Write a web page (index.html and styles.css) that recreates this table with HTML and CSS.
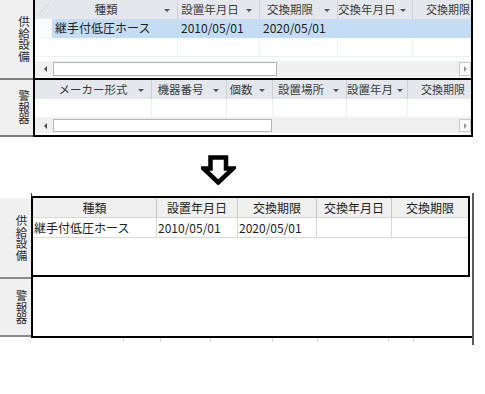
FILE: index.html
```html
<!DOCTYPE html>
<html lang="ja">
<head>
<meta charset="utf-8">
<link rel="stylesheet" href="styles.css">
</head>
<body>
<div class="top">
  <div class="sec s1">
    <div class="lbl"><span class="vt">供給設備</span></div>
    <div class="sub">
      <div class="grid g1 hdr">
        <div class="corner"></div>
        <div class="hc"><span class="ht">種類</span><i class="dd"></i></div>
        <div class="hc"><span class="ht">設置年月日</span><i class="dd"></i></div>
        <div class="hc"><span class="ht">交換期限</span><i class="dd"></i></div>
        <div class="hc"><span class="ht">交換年月日</span><i class="dd"></i></div>
        <div class="hc last"><span class="ht">交換期限</span></div>
      </div>
      <div class="grid g1 row sel">
        <div class="rs"></div>
        <div class="dc">継手付低圧ホース</div>
        <div class="dc">2010/05/01</div>
        <div class="dc">2020/05/01</div>
        <div class="dc"></div>
        <div class="dc"></div>
      </div>
      <div class="grid g1 row">
        <div class="rs"></div>
        <div class="dc"></div>
        <div class="dc"></div>
        <div class="dc"></div>
        <div class="dc"></div>
        <div class="dc"></div>
      </div>
      <div class="hscroll">
        <div class="sbtn left"><i class="tl"></i></div>
        <div class="thumb t1"></div>
        <div class="track"></div>
        <div class="sbtn right"><i class="tr"></i></div>
      </div>
    </div>
  </div>
  <div class="sec s2">
    <div class="lbl"><span class="vt">警報器</span></div>
    <div class="sub">
      <div class="grid g2 hdr">
        <div class="corner"></div>
        <div class="hc"><span class="ht">メーカー形式</span><i class="dd"></i></div>
        <div class="hc"><span class="ht">機器番号</span><i class="dd"></i></div>
        <div class="hc"><span class="ht">個数</span><i class="dd"></i></div>
        <div class="hc"><span class="ht">設置場所</span><i class="dd"></i></div>
        <div class="hc"><span class="ht">設置年月</span><i class="dd"></i></div>
        <div class="hc last"><span class="ht">交換期限</span></div>
      </div>
      <div class="grid g2 row">
        <div class="rs"></div>
        <div class="dc"></div>
        <div class="dc"></div>
        <div class="dc"></div>
        <div class="dc"></div>
        <div class="dc"></div>
        <div class="dc"></div>
      </div>
      <div class="hscroll">
        <div class="sbtn left"><i class="tl"></i></div>
        <div class="thumb t2"></div>
        <div class="track"></div>
        <div class="sbtn right"><i class="tr"></i></div>
      </div>
    </div>
  </div>
</div>

<div class="arrowrow">
  <svg class="arrow" width="35" height="30" viewBox="0 0 35 30">
    <path d="M9.5,2.5 H25 V13.5 H32 L17.25,27.5 L2.5,13.5 H9.5 Z" fill="#fff" stroke="#000" stroke-width="4.5" stroke-linejoin="miter"/>
  </svg>
</div>

<div class="bot">
  <div class="lcol">
    <div class="blbl b1"><span class="vt">供給設備</span></div>
    <div class="bsep"></div>
    <div class="blbl b2"><span class="vt">警報器</span></div>
    <div class="bsep"></div>
  </div>
  <div class="main">
    <div class="stub"></div>
    <div class="box">
      <div class="grid g3 bh">
        <div class="bc">種類</div>
        <div class="bc">設置年月日</div>
        <div class="bc">交換期限</div>
        <div class="bc">交換年月日</div>
        <div class="bc">交換期限</div>
      </div>
      <div class="grid g3 br">
        <div class="bd">継手付低圧ホース</div>
        <div class="bd">2010/05/01</div>
        <div class="bd">2020/05/01</div>
        <div class="bd"></div>
        <div class="bd"></div>
      </div>
    </div>
    <div class="bsec2"></div>
    <div class="ticks">
      <i class="tk k1"></i><i class="tk k2"></i><i class="tk k3"></i><i class="tk k4"></i><i class="tk k5"></i><i class="tk k6"></i><i class="tk k7"></i>
    </div>
  </div>
  <div class="rline"></div>
</div>
</body>
</html>
```

FILE: styles.css
```css
* { box-sizing: border-box; }
html, body { margin: 0; padding: 0; background: #fff; }
body {
  width: 485px;
  height: 394px;
  overflow: hidden;
  font-family: "Noto Sans CJK JP", "Noto Sans", sans-serif;
  font-size: 12px;
  color: #1e1e1e;
}

/* ---------- top (before) ---------- */
.top { width: 473px; }
.sec { display: flex; }
.lbl {
  width: 33px;
  background: #f0f0f0;
  border-bottom: 2px solid #7e7e7e;
  display: flex;
  align-items: center;
  justify-content: center;
  padding-left: 14px;
}
.s1 .lbl { height: 80px; }
.s2 .lbl { height: 57px; }
.vt {
  writing-mode: vertical-rl;
  text-orientation: upright;
  font-size: 11.5px;
  line-height: 13px;
  color: #2a2a2a;
}
.sub {
  width: 440px;
  border-left: 2px solid #000;
  border-right: 2px solid #000;
  border-bottom: 2px solid #000;
  display: flex;
  flex-direction: column;
  overflow: hidden;
}
.s1 .sub { height: 80px; }
.s2 .sub { height: 57px; }

.grid { display: grid; }
.g1 { grid-template-columns: 17px 126px 82px 78px 75px 58px; }
.g2 { grid-template-columns: 17px 100px 75px 46px 74px 61px 63px; }

.hdr { height: 19px; background: #e4e7ec; }
.corner {
  background: linear-gradient(135deg, transparent 0 50%, #d3d6db 50% 54%, transparent 54%);
  background-size: 12px 12px;
  background-repeat: no-repeat;
  background-position: 3px 3px;
}
.hc {
  display: flex;
  align-items: center;
  border-right: 1px solid #cdd1d7;
  padding-right: 7px;
  white-space: nowrap;
  overflow: hidden;
}
.hc.last { border-right: none; padding-left: 13px; padding-right: 0; }
.ht {
  flex: 1;
  text-align: center;
  line-height: 19px;
  font-size: 11.5px;
  color: #3c3c3c;
}
.hc.last .ht { flex: none; text-align: left; font-size: 11px; }
.dd {
  width: 0; height: 0;
  border-left: 3px solid transparent;
  border-right: 3px solid transparent;
  border-top: 3px solid #555;
  margin-left: 4px;
  margin-top: 2px;
}

.row { height: 19px; }
.rs { background: #fff; border-bottom: 1px solid #f1f3f6; }
.dc {
  border-right: 1px solid #edf0f4;
  border-bottom: 1px solid #edf0f4;
  line-height: 18px;
  padding-left: 3px;
  white-space: nowrap;
  overflow: hidden;
  color: #1e1e1e;
}
.sel .dc { background: #c4ddf5; border-color: #c4ddf5; }
.sel .rs { background: #fbfcfe; }

.hscroll {
  display: flex;
  background: #f0f0f0;
  padding: 1px 0 1px 2px;
}
.s1 .hscroll { height: 16px; margin-top: auto; margin-bottom: 1px; }
.s2 .hscroll { height: 15px; margin-top: 0; margin-bottom: 2px; }
.sbtn {
  display: flex;
  align-items: center;
  justify-content: center;
}
.sbtn.left { width: 16px; }
.sbtn.right {
  width: 12px;
  background: #fafafa;
  border: 1px solid #c9c9c9;
}
.tl {
  width: 0; height: 0;
  border-top: 3px solid transparent;
  border-bottom: 3px solid transparent;
  border-right: 3px solid #4a4a4a;
}
.tr {
  width: 0; height: 0;
  border-top: 3px solid transparent;
  border-bottom: 3px solid transparent;
  border-left: 3px solid #9a9a9a;
}
.thumb {
  background: #fff;
  border: 1px solid #b4b4b4;
}
.t1 { width: 224px; }
.t2 { width: 219px; }
.track { flex: 1; }

/* ---------- arrow ---------- */
.arrowrow {
  height: 53px;
  padding-top: 18px;
  padding-left: 201px;
}
.arrow { display: block; }

/* ---------- bottom (after) ---------- */
.bot { display: flex; height: 155px; }
.lcol { width: 31px; padding-top: 8px; }
.blbl {
  background: #f0f0f0;
  display: flex;
  align-items: center;
  justify-content: center;
  padding-left: 11px;
}
.b1 { height: 79px; }
.b2 { height: 56px; }
.bsep { height: 2px; background: #8a8a8a; }

.main { width: 441px; padding-top: 3px; }
.stub { width: 1px; height: 3px; background: #444; }
.box {
  width: 439px;
  height: 81px;
  border: 2px solid #000;
}
.g3 { grid-template-columns: 124px 81px 79px 75px 76px; }
.bh { height: 20px; background: #f0f0f0; }
.bc {
  text-align: center;
  line-height: 19px;
  border-right: 1px solid #c8c8c8;
  border-bottom: 1px solid #d8d8d8;
}
.br { height: 20px; }
.bd {
  line-height: 19px;
  border-right: 1px solid #d8d8d8;
  border-bottom: 1px solid #d8d8d8;
  white-space: nowrap;
  overflow: hidden;
  padding-left: 1px;
}
.bc:last-child, .bd:last-child { border-right: none; }
.bsec2 {
  height: 61px;
  border-left: 2px solid #000;
  border-bottom: 2px solid #000;
}
.ticks { display: flex; height: 6px; }
.tk { display: block; width: 1px; height: 4px; background: #d6d6d6; }
.k1 { margin-left: 92px; }
.k2 { margin-left: 36px; }
.k3 { margin-left: 49px; }
.k4 { margin-left: 61px; }
.k5 { margin-left: 44px; }
.k6 { margin-left: 70px; }
.k7 { margin-left: 24px; }
.rline { width: 2px; margin-top: 3px; background: #5a5a5a; }
```
